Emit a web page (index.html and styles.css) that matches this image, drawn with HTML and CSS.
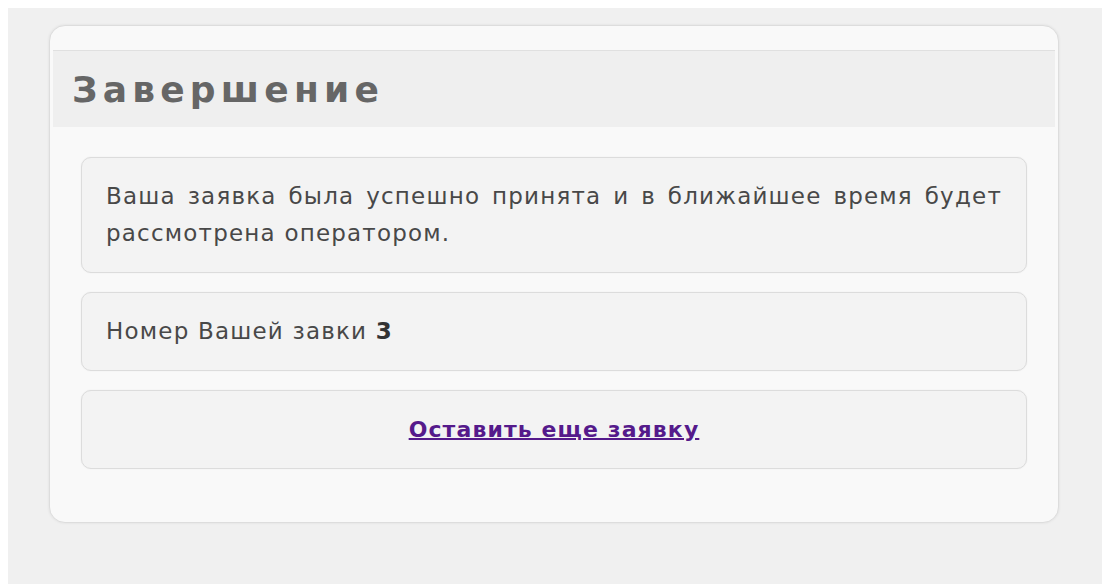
FILE: index.html
```html
<!DOCTYPE html>
<html lang="ru">
<head>
<meta charset="utf-8">
<title>Завершение</title>
<link rel="stylesheet" href="styles.css">
</head>
<body>
<div class="page">
  <div class="card">
    <div class="card-head">
      <h1 class="card-title">Завершение</h1>
    </div>
    <div class="card-body">
      <div class="note note-text">Ваша заявка была успешно принята и в ближайшее время будет рассмотрена оператором.</div>
      <div class="note">Номер Вашей завки <b>3</b></div>
      <div class="note note-center"><a class="more-link" href="#">Оставить еще заявку</a></div>
    </div>
  </div>
</div>
</body>
</html>
```

FILE: styles.css
```css
html, body {
  height: 100%;
}

body {
  margin: 8px 0 0 8px;
  background: #ffffff;
  font-family: "DejaVu Sans", "Liberation Sans", sans-serif;
}

.page {
  box-sizing: border-box;
  min-height: calc(100vh - 8px);
  padding: 17px 0 0 41px;
  background: #f0f0f0;
}

.card {
  box-sizing: border-box;
  width: 1010px;
  padding: 24px 3px 53px;
  background: #f9f9f9;
  border: 1px solid #dddddd;
  border-radius: 16px;
  box-shadow: 0 0 3px rgba(0, 0, 0, 0.08);
}

.card-head {
  display: flex;
  align-items: center;
  height: 76px;
  padding: 0 20px;
  background: #efefef;
  border-top: 1px solid #e0e0e0;
}

.card-title {
  margin: 0 0 0 -1px;
  font-size: 36px;
  font-weight: bold;
  letter-spacing: 5.2px;
  color: #666666;
}

.card-body {
  display: flex;
  flex-direction: column;
  gap: 19px;
  padding: 30px 28px 0;
}

.note {
  padding: 20px 24px;
  background: #f3f3f3;
  border: 1px solid #dcdcdc;
  border-radius: 10px;
  box-shadow: 0 0 2px rgba(0, 0, 0, 0.06);
  font-size: 23px;
  line-height: 37px;
  letter-spacing: 1.2px;
  color: #484848;
}

.note-text {
  text-align: justify;
}

.note b {
  color: #333333;
}

.note-center {
  text-align: center;
}

.more-link {
  font-size: 22px;
  font-weight: bold;
  letter-spacing: 1.1px;
  color: #551a8b;
  text-decoration: underline;
  text-decoration-thickness: 2px;
}
```
